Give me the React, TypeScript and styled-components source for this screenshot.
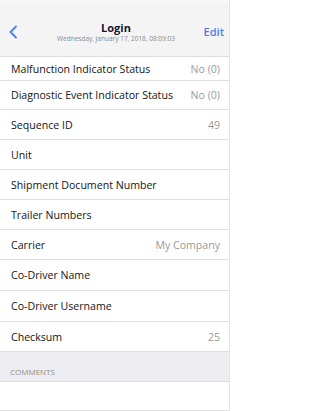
import React from 'react';
import styled, {createGlobalStyle} from 'styled-components';

const GlobalStyle = createGlobalStyle`
  html, body {
    margin: 0;
    padding: 0;
    background: #fff;
  }
  body {
    font-family: "Open Sans", "Noto Sans", sans-serif;
    color: #222;
  }
  * {
    box-sizing: border-box;
  }
`;

const Screen = styled.div`
  width: 230px;
  height: 411px;
  overflow: hidden;
  display: flex;
  flex-direction: column;
  border-right: 1px solid #e4e4e4;
`;

const NavBar = styled.header`
  flex: 0 0 57px;
  background: #f4f4f4;
  border-top: 3px solid #f9f9f9;
  border-bottom: 1px solid #dcdcdc;
  display: grid;
  grid-template-columns: 40px 1fr 40px;
  align-items: center;
  padding: 4px 5px 0 8px;
`;

const BackButton = styled.button`
  border: none;
  background: none;
  padding: 0;
  display: flex;
  align-items: center;
  color: #4a7ef2;
  cursor: pointer;
`;

const TitleBlock = styled.div`
  display: flex;
  flex-direction: column;
  align-items: center;
  gap: 1px;
`;

const Title = styled.div`
  font-size: 11px;
  line-height: 13px;
  font-weight: 700;
  color: #15152e;
`;

const Subtitle = styled.div`
  font-size: 6.5px;
  line-height: 8px;
  color: #8a8a8a;
  white-space: nowrap;
`;

const EditButton = styled.button`
  border: none;
  background: none;
  padding: 0;
  justify-self: end;
  font-family: inherit;
  font-size: 11px;
  font-weight: 600;
  color: #4a7ef2;
  cursor: pointer;
`;

const List = styled.div`
  flex: 1;
  display: flex;
  flex-direction: column;
  overflow: hidden;
`;

const Row = styled.div<{$height?: number}>`
  flex: 0 0 ${p => p.$height ?? 30}px;
  display: flex;
  align-items: center;
  justify-content: space-between;
  padding: 0 9px 0 11px;
  border-bottom: 1px solid #dedede;
  background: #fff;
  font-size: 10.6px;
`;

const Label = styled.span`
  color: #151515;
  font-weight: 500;
  white-space: nowrap;
`;

const Value = styled.span`
  color: #9a9a9a;
  white-space: nowrap;
`;

const SectionHeader = styled.div`
  flex: 0 0 30px;
  background: #eeeef2;
  border-bottom: 1px solid #dedede;
  display: flex;
  align-items: flex-end;
  padding: 0 10px 4px;
  font-size: 8px;
  color: #8c8c8c;
  text-transform: uppercase;
`;

const CommentBox = styled.div`
  flex: 0 0 29px;
  background: #fff;
  border-bottom: 1px solid #dedede;
`;

const rows: { label: string; value?: string; height?: number }[] = [
    {label: 'Malfunction Indicator Status', value: 'No (0)', height: 24},
    {label: 'Diagnostic Event Indicator Status', value: 'No (0)', height: 29},
    {label: 'Sequence ID', value: '49'},
    {label: 'Unit'},
    {label: 'Shipment Document Number'},
    {label: 'Trailer Numbers'},
    {label: 'Carrier', value: 'My Company'},
    {label: 'Co-Driver Name', height: 31},
    {label: 'Co-Driver Username', height: 31},
    {label: 'Checksum', value: '25'},
];

const App: React.FC = () => {
    return (
        <>
            <GlobalStyle/>
            <Screen>
                <NavBar>
                    <BackButton aria-label="Back">
                        <svg width="10" height="14" viewBox="0 0 10 14" fill="none">
                            <path d="M8 1.5L2.5 7L8 12.5" stroke="currentColor" strokeWidth="1.8"
                                  strokeLinecap="round" strokeLinejoin="round"/>
                        </svg>
                    </BackButton>
                    <TitleBlock>
                        <Title>Login</Title>
                        <Subtitle>Wednesday, January 17, 2018, 08:09:03</Subtitle>
                    </TitleBlock>
                    <EditButton>Edit</EditButton>
                </NavBar>
                <List>
                    {rows.map((r, index) => (
                        <Row key={index} $height={r.height}>
                            <Label>{r.label}</Label>
                            {r.value ? <Value>{r.value}</Value> : null}
                        </Row>
                    ))}
                    <SectionHeader>Comments</SectionHeader>
                    <CommentBox/>
                </List>
            </Screen>
        </>
    );
};

export default App;
